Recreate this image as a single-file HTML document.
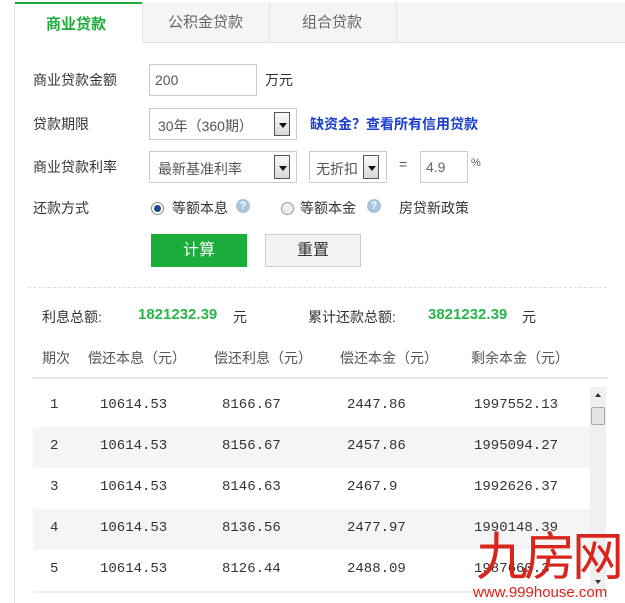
<!DOCTYPE html>
<html><head><meta charset="utf-8"><style>
*{margin:0;padding:0;box-sizing:border-box}
body{width:625px;height:603px;background:#fff;position:relative;overflow:hidden;font-family:"Liberation Sans","Noto Sans CJK SC",sans-serif;font-size:14px;color:#333}
.a{position:absolute;white-space:nowrap}
.box{position:absolute;border:1px solid #ccc;background:#fff;font-size:14px;color:#555;padding-left:8px}
.arr{position:absolute;width:16px;height:24px;border:1px solid #555;background:linear-gradient(#fafafa,#d8d8d8)}
.arr:after{content:"";position:absolute;left:4px;top:10px;border-left:4px solid transparent;border-right:4px solid transparent;border-top:5px solid #111}
.mono{font-family:"Liberation Mono","DejaVu Sans Mono",monospace;font-size:14px;color:#333}
.row{position:absolute;left:33px;width:557px;height:41px}
</style></head><body>
<div class="a" style="left:14px;top:2px;width:1px;height:601px;background:#e3e3e3"></div>
<div class="a" style="left:142px;top:2px;width:483px;height:41px;background:#f5f5f5;border-bottom:1px solid #e3e3e3"></div>
<div class="a" style="left:142px;top:2px;width:1px;height:41px;background:#e3e3e3"></div>
<div class="a" style="left:269px;top:2px;width:1px;height:41px;background:#e3e3e3"></div>
<div class="a" style="left:396px;top:2px;width:1px;height:41px;background:#e3e3e3"></div>
<div class="a" style="left:15px;top:2px;width:127px;height:2px;background:#1aab3a"></div>
<div class="a" style="left:46px;top:13px;font-size:15px;font-weight:bold;color:#1aab3a">商业贷款</div>
<div class="a" style="left:168px;top:11px;font-size:15px;color:#666">公积金贷款</div>
<div class="a" style="left:302px;top:11px;font-size:15px;color:#666">组合贷款</div>

<div class="a" style="left:33px;top:70px">商业贷款金额</div>
<div class="box" style="left:149px;top:64px;width:108px;height:32px;line-height:30px;padding-left:5px">200</div>
<div class="a" style="left:265px;top:70px">万元</div>

<div class="a" style="left:33px;top:114px">贷款期限</div>
<div class="box" style="left:149px;top:108px;width:148px;height:32px;line-height:34px">30年（360期）</div>
<div class="arr" style="left:274px;top:112px"></div>
<div class="a" style="left:310px;top:114px;color:#1a3fcf;font-weight:bold">缺资金？查看所有信用贷款</div>

<div class="a" style="left:33px;top:157px">商业贷款利率</div>
<div class="box" style="left:149px;top:151px;width:148px;height:32px;line-height:34px">最新基准利率</div>
<div class="arr" style="left:274px;top:155px"></div>
<div class="box" style="left:309px;top:151px;width:78px;height:32px;line-height:34px;padding-left:6px">无折扣</div>
<div class="arr" style="left:363px;top:155px"></div>
<div class="a" style="left:399px;top:156px;color:#555">=</div>
<div class="box" style="left:420px;top:151px;width:48px;height:32px;line-height:30px;padding-left:5px;color:#666">4.9</div>
<div class="a" style="left:471px;top:157px;font-size:11px;color:#555">%</div>

<div class="a" style="left:33px;top:198px">还款方式</div>
<div class="a" style="left:151px;top:202px;width:13px;height:13px;border-radius:50%;border:1px solid #888;background:#fff"></div>
<div class="a" style="left:154px;top:205px;width:7px;height:7px;border-radius:50%;background:#1a4a8a"></div>
<div class="a" style="left:172px;top:198px">等额本息</div>
<div class="a" style="left:236px;top:199px;width:14px;height:14px;border-radius:50%;background:#a9c5dd;color:#fff;font-size:11px;text-align:center;line-height:14px;font-weight:bold">?</div>
<div class="a" style="left:281px;top:202px;width:13px;height:13px;border-radius:50%;border:1px solid #999;background:#eee"></div>
<div class="a" style="left:300px;top:198px">等额本金</div>
<div class="a" style="left:367px;top:199px;width:14px;height:14px;border-radius:50%;background:#a9c5dd;color:#fff;font-size:11px;text-align:center;line-height:14px;font-weight:bold">?</div>
<div class="a" style="left:399px;top:198px">房贷新政策</div>

<div class="a" style="left:151px;top:234px;width:96px;height:33px;background:#1aad3a;color:#fff;font-size:16px;text-align:center;line-height:33px">计算</div>
<div class="a" style="left:265px;top:234px;width:96px;height:33px;background:#f3f3f3;border:1px solid #ccc;color:#333;font-size:16px;text-align:center;line-height:31px">重置</div>

<div class="a" style="left:28px;top:287px;width:579px;border-top:1px dashed #ddd"></div>
<div class="a" style="left:42px;top:307px">利息总额:</div>
<div class="a" style="left:138px;top:306px;color:#2bb54a;font-weight:bold;font-size:15px">1821232.39</div>
<div class="a" style="left:233px;top:307px">元</div>
<div class="a" style="left:308px;top:307px">累计还款总额:</div>
<div class="a" style="left:428px;top:306px;color:#2bb54a;font-weight:bold;font-size:15px">3821232.39</div>
<div class="a" style="left:522px;top:307px">元</div>

<div class="a" style="left:42px;top:348px;color:#555">期次</div>
<div class="a" style="left:88px;top:348px;color:#555">偿还本息（元）</div>
<div class="a" style="left:214px;top:348px;color:#555">偿还利息（元）</div>
<div class="a" style="left:340px;top:348px;color:#555">偿还本金（元）</div>
<div class="a" style="left:471px;top:348px;color:#555">剩余本金（元）</div>
<div class="a" style="left:33px;top:377px;width:574px;height:2px;background:#e8e8e8"></div>

<div class="row" style="top:386px"></div>
<div class="row" style="top:427px;background:#f5f5f5"></div>
<div class="row" style="top:468px"></div>
<div class="row" style="top:509px;background:#f5f5f5"></div>
<div class="row" style="top:550px"></div>
<div class="a" style="left:33px;top:591px;width:574px;height:2px;background:#eee"></div>

<div class="a mono" style="left:50px;top:397px">1</div><div class="a mono" style="left:100px;top:397px">10614.53</div><div class="a mono" style="left:222px;top:397px">8166.67</div><div class="a mono" style="left:347px;top:397px">2447.86</div><div class="a mono" style="left:474px;top:397px">1997552.13</div>
<div class="a mono" style="left:50px;top:438px">2</div><div class="a mono" style="left:100px;top:438px">10614.53</div><div class="a mono" style="left:222px;top:438px">8156.67</div><div class="a mono" style="left:347px;top:438px">2457.86</div><div class="a mono" style="left:474px;top:438px">1995094.27</div>
<div class="a mono" style="left:50px;top:479px">3</div><div class="a mono" style="left:100px;top:479px">10614.53</div><div class="a mono" style="left:222px;top:479px">8146.63</div><div class="a mono" style="left:347px;top:479px">2467.9</div><div class="a mono" style="left:474px;top:479px">1992626.37</div>
<div class="a mono" style="left:50px;top:520px">4</div><div class="a mono" style="left:100px;top:520px">10614.53</div><div class="a mono" style="left:222px;top:520px">8136.56</div><div class="a mono" style="left:347px;top:520px">2477.97</div><div class="a mono" style="left:474px;top:520px">1990148.39</div>
<div class="a mono" style="left:50px;top:561px">5</div><div class="a mono" style="left:100px;top:561px">10614.53</div><div class="a mono" style="left:222px;top:561px">8126.44</div><div class="a mono" style="left:347px;top:561px">2488.09</div><div class="a mono" style="left:474px;top:561px">1987660.3</div>

<div class="a" style="left:590px;top:387px;width:16px;height:203px;background:#f0f0f0"></div>
<div class="a" style="left:591px;top:407px;width:14px;height:18px;background:#e4e4e4;border:1px solid #aaa;border-radius:2px"></div>
<div class="a" style="left:595px;top:393px;border-left:3px solid transparent;border-right:3px solid transparent;border-bottom:4px solid #333"></div>
<div class="a" style="left:595px;top:580px;border-left:3px solid transparent;border-right:3px solid transparent;border-top:4px solid #333"></div>

<div class="a" style="left:476px;top:530px;font-size:52px;line-height:56px;color:#d8261c;letter-spacing:-4px">九房网</div>
<div class="a" style="left:473px;top:584px;font-size:15px;color:#d8261c">www.999house.com</div>
</body></html>
